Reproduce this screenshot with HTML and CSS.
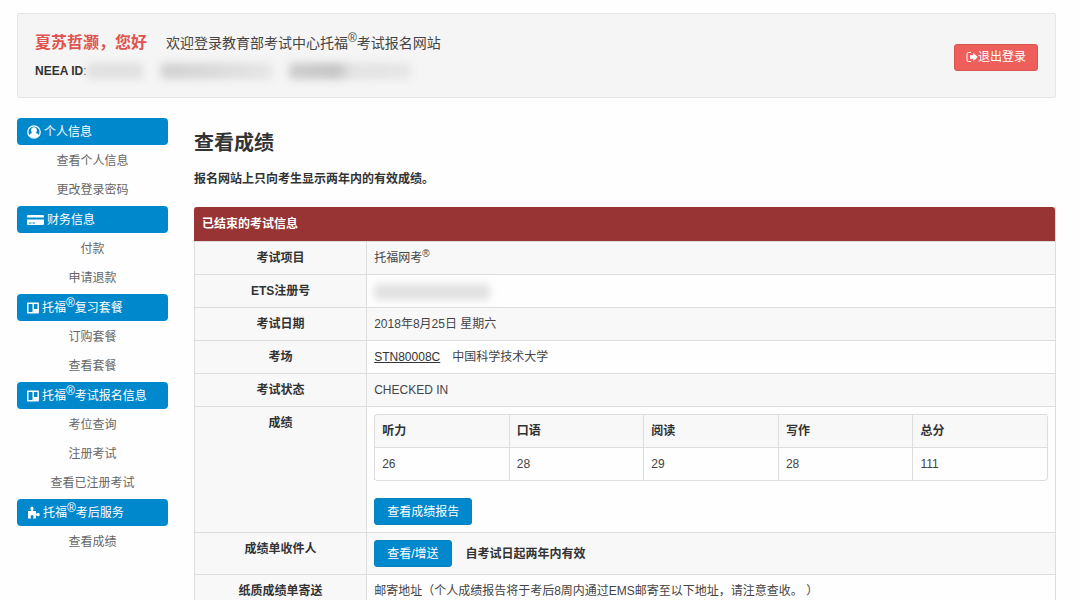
FILE: index.html
```html
<!DOCTYPE html>
<html lang="zh-CN">
<head>
<meta charset="UTF-8">
<meta name="viewport" content="width=device-width, initial-scale=1">
<title>查看成绩</title>
<link rel="stylesheet" href="styles.css">
</head>
<body>
<header class="welcome">
  <div>
    <div class="line">
      <strong class="user">夏苏哲灏，您好</strong>
      <span class="greeting">欢迎登录教育部考试中心托福<sup>®</sup>考试报名网站</span>
    </div>
    <div class="line">
      <span><b>NEEA ID</b>:</span>
      <span class="masked id"></span>
      <span class="masked account"></span>
      <span class="masked contact"></span>
    </div>
  </div>
  <button type="button" class="btn logout">
    <svg width="12" height="12" viewBox="0 0 12 12"><path d="M5 1.5H2.5Q1 1.5 1 3v6q0 1.500 1.500 1.500H5" fill="none" stroke="#fff"/><path d="M4 4.300h3.200V1.800L11.700 6 7.200 10.200V7.700H4z" fill="#fff"/></svg>退出登录
  </button>
</header>
<div class="container">
  <nav class="sidebar">
    <div class="group">
      <h3><svg width="14" height="14" viewBox="0 0 14 14"><circle cx="7" cy="7" r="6.200" fill="none" stroke="#fff" stroke-width="1.300"/><path d="M7 2.300c1.800 0 2.900 1.300 2.900 3 0 1.200-.5 2.200-1.200 2.800 1.500.3 2.700 1 3.100 2.300A5.800 5.800 0 0 1 7 12.800a5.800 5.800 0 0 1-4.800-2.400C2.600 9.100 3.800 8.400 5.300 8.100 4.600 7.500 4.100 6.500 4.100 5.300c0-1.700 1.100-3 2.900-3z" fill="#fff"/></svg>个人信息</h3>
      <a href="#">查看个人信息</a>
      <a href="#">更改登录密码</a>
    </div>
    <div class="group">
      <h3><svg width="17" height="12" viewBox="0 0 17 12"><path d="M1 1h15q1 0 1 1v1.500H0V2q0-1 1-1zM0 5.500h17V10q0 1-1 1H1q-1 0-1-1z" fill="#fff"/><path d="M2 9h2.500M5.500 9H8" stroke="#08c" stroke-width="1"/></svg>财务信息</h3>
      <a href="#">付款</a>
      <a href="#">申请退款</a>
    </div>
    <div class="group">
      <h3><svg width="12" height="12" viewBox="0 0 12 12"><path fill-rule="evenodd" d="M1 0.500h10q1 0 1 1v9q0 1-1 1H1q-1 0-1-1v-9q0-1 1-1zM1.500 2v8h4V2zM7 2v5h3.500V2z" fill="#fff"/></svg>托福<sup>®</sup>复习套餐</h3>
      <a href="#">订购套餐</a>
      <a href="#">查看套餐</a>
    </div>
    <div class="group">
      <h3><svg width="12" height="12" viewBox="0 0 12 12"><path fill-rule="evenodd" d="M1 0.500h10q1 0 1 1v9q0 1-1 1H1q-1 0-1-1v-9q0-1 1-1zM1.500 2v8h4V2zM7 2v5h3.500V2z" fill="#fff"/></svg>托福<sup>®</sup>考试报名信息</h3>
      <a href="#">考位查询</a>
      <a href="#">注册考试</a>
      <a href="#">查看已注册考试</a>
    </div>
    <div class="group">
      <h3><svg width="13" height="13" viewBox="0 0 13 13"><path d="M1 5h3.200c.3-.5-.8-1.200-.8-2.500C3.400 1.300 4.200.7 5 .7s1.600.6 1.600 1.800C6.600 3.800 5.600 4.500 5.900 5H9v2.700c.5.500 1.100-.6 2.200-.6.900 0 1.500.7 1.500 1.600s-.6 1.600-1.500 1.600c-1.100 0-1.700-1-2.200-.6v2.800H6.200c-.5-.5.400-1 .4-2 0-.8-.7-1.300-1.500-1.300s-1.500.5-1.500 1.300c0 1 .8 1.500.4 2H1z" fill="#fff"/></svg>托福<sup>®</sup>考后服务</h3>
      <a href="#">查看成绩</a>
    </div>
  </nav>
  <main class="content">
    <h1>查看成绩</h1>
    <p class="notice">报名网站上只向考生显示两年内的有效成绩。</p>
    <table class="info">
      <colgroup>
        <col class="label-col">
        <col>
      </colgroup>
      <thead>
        <tr><th colspan="2">已结束的考试信息</th></tr>
      </thead>
      <tbody>
        <tr class="odd">
          <th scope="row">考试项目</th>
          <td>托福网考<sup>®</sup></td>
        </tr>
        <tr>
          <th scope="row">ETS注册号</th>
          <td><span class="masked number"></span></td>
        </tr>
        <tr class="odd">
          <th scope="row">考试日期</th>
          <td>2018年8月25日 星期六</td>
        </tr>
        <tr>
          <th scope="row">考场</th>
          <td><a href="#" class="center-code">STN80008C</a>中国科学技术大学</td>
        </tr>
        <tr class="odd">
          <th scope="row">考试状态</th>
          <td>CHECKED IN</td>
        </tr>
        <tr>
          <th scope="row">成绩</th>
          <td>
            <table class="scores">
              <thead>
                <tr><th>听力</th><th>口语</th><th>阅读</th><th>写作</th><th>总分</th></tr>
              </thead>
              <tbody>
                <tr><td>26</td><td>28</td><td>29</td><td>28</td><td>111</td></tr>
              </tbody>
            </table>
            <button type="button" class="btn">查看成绩报告</button>
          </td>
        </tr>
        <tr class="odd">
          <th scope="row">成绩单收件人</th>
          <td>
            <div class="receiver">
              <button type="button" class="btn">查看/增送</button>
              <b>自考试日起两年内有效</b>
            </div>
          </td>
        </tr>
        <tr class="mailing">
          <th scope="row">纸质成绩单寄送</th>
          <td>
            邮寄地址（个人成绩报告将于考后8周内通过EMS邮寄至以下地址，请注意查收。 ）
            <div class="address"></div>
          </td>
        </tr>
      </tbody>
    </table>
  </main>
</div>
</body>
</html>
```

FILE: styles.css
```css
body {
  margin: 13px 24px 0 17px;
  font-family: "Liberation Sans", "Noto Sans CJK SC", sans-serif;
  font-size: 12px;
  line-height: 18px;
  color: #444;
  background-color: #fefefe;
}

sup {
  font-size: 10px;
  line-height: 0;
}

.welcome {
  display: flex;
  justify-content: space-between;
  align-items: center;
  padding: 15px 17px 12px;
  border: 1px solid #e5e5e5;
  border-radius: 2px;
  background-color: #f5f5f6;
}

.line {
  display: flex;
  align-items: center;
  height: 28px;
}

.line b {
  color: #333;
}

.user {
  margin-right: 19px;
  font-size: 16px;
  color: #e0524c;
}

.greeting {
  font-size: 14px;
}

.greeting sup {
  font-size: 12px;
}

.masked {
  display: inline-block;
  height: 16px;
  border-radius: 4px;
  background-color: #e0e0e1;
  filter: blur(4px);
}

.id {
  width: 56px;
}

.account {
  width: 112px;
  margin-left: 18px;
  background: linear-gradient(to right, #d0d0d1, #d8d8d9 40%, #e6e6e7);
}

.contact {
  width: 122px;
  margin-left: 16px;
  background: linear-gradient(to right, #cdcdce, #c4c4c5 40%, #e2e2e3 50%, #e6e6e7);
}

.number {
  width: 116px;
  vertical-align: middle;
}

.btn {
  height: 27px;
  padding: 0 12px;
  border: 1px solid #0780bd;
  border-radius: 3px;
  font: inherit;
  color: #fff;
  background-color: #08c;
}

.logout {
  display: flex;
  align-items: center;
  padding: 0 11px;
  border-color: #d9534f;
  background-color: #ee5f5b;
}

.container {
  display: flex;
  gap: 26px;
  margin-top: 20px;
}

.sidebar {
  width: 151px;
  flex-shrink: 0;
}

.group {
  margin-bottom: 1px;
}

.group h3 {
  display: flex;
  align-items: center;
  height: 27px;
  margin: 0 0 2px;
  padding-left: 10px;
  border-radius: 4px;
  font-size: 12px;
  font-weight: normal;
  color: #fff;
  background-color: #08c;
}

.group h3 svg {
  margin-right: 3px;
}

.group h3 sup {
  align-self: flex-start;
  font-size: 12px;
  line-height: 18px;
}

.group a {
  display: block;
  line-height: 29px;
  text-align: center;
  text-decoration: none;
  color: #666;
}

.content {
  flex: 1;
}

h1 {
  margin: 11px 0 13px;
  font-size: 20px;
  line-height: 28px;
  color: #333;
}

.notice {
  margin: 0 0 19px;
  font-weight: bold;
  color: #333;
}

table {
  width: 100%;
  border-spacing: 0;
  table-layout: fixed;
}

th,
td {
  padding: 7px;
  border-top: 1px solid #ddd;
  border-left: 1px solid #ddd;
  vertical-align: top;
}

th {
  color: #333;
}

.info {
  border-right: 1px solid #ddd;
}

.label-col {
  width: 20%;
}

.info > thead th {
  padding: 8px;
  border: 0;
  border-radius: 3px 3px 0 0;
  text-align: left;
  color: #fff;
  background-color: #993434;
}

.info > tbody > tr > th {
  background-color: #f8f8f9;
}

.odd {
  background-color: #f8f8f9;
}

.center-code {
  margin-right: 12px;
  color: #333;
}

.scores {
  margin-bottom: 17px;
  border-right: 1px solid #ddd;
  border-bottom: 1px solid #ddd;
  border-radius: 4px;
}

.scores th {
  text-align: left;
  background-color: #f8f8f9;
}

.scores th:first-child {
  border-top-left-radius: 4px;
}

.receiver {
  display: flex;
  align-items: center;
  gap: 14px;
}

.receiver b {
  color: #333;
}

.mailing th,
.mailing td {
  padding-bottom: 0;
}

.address {
  border-top: 1px solid #ddd;
}
```
